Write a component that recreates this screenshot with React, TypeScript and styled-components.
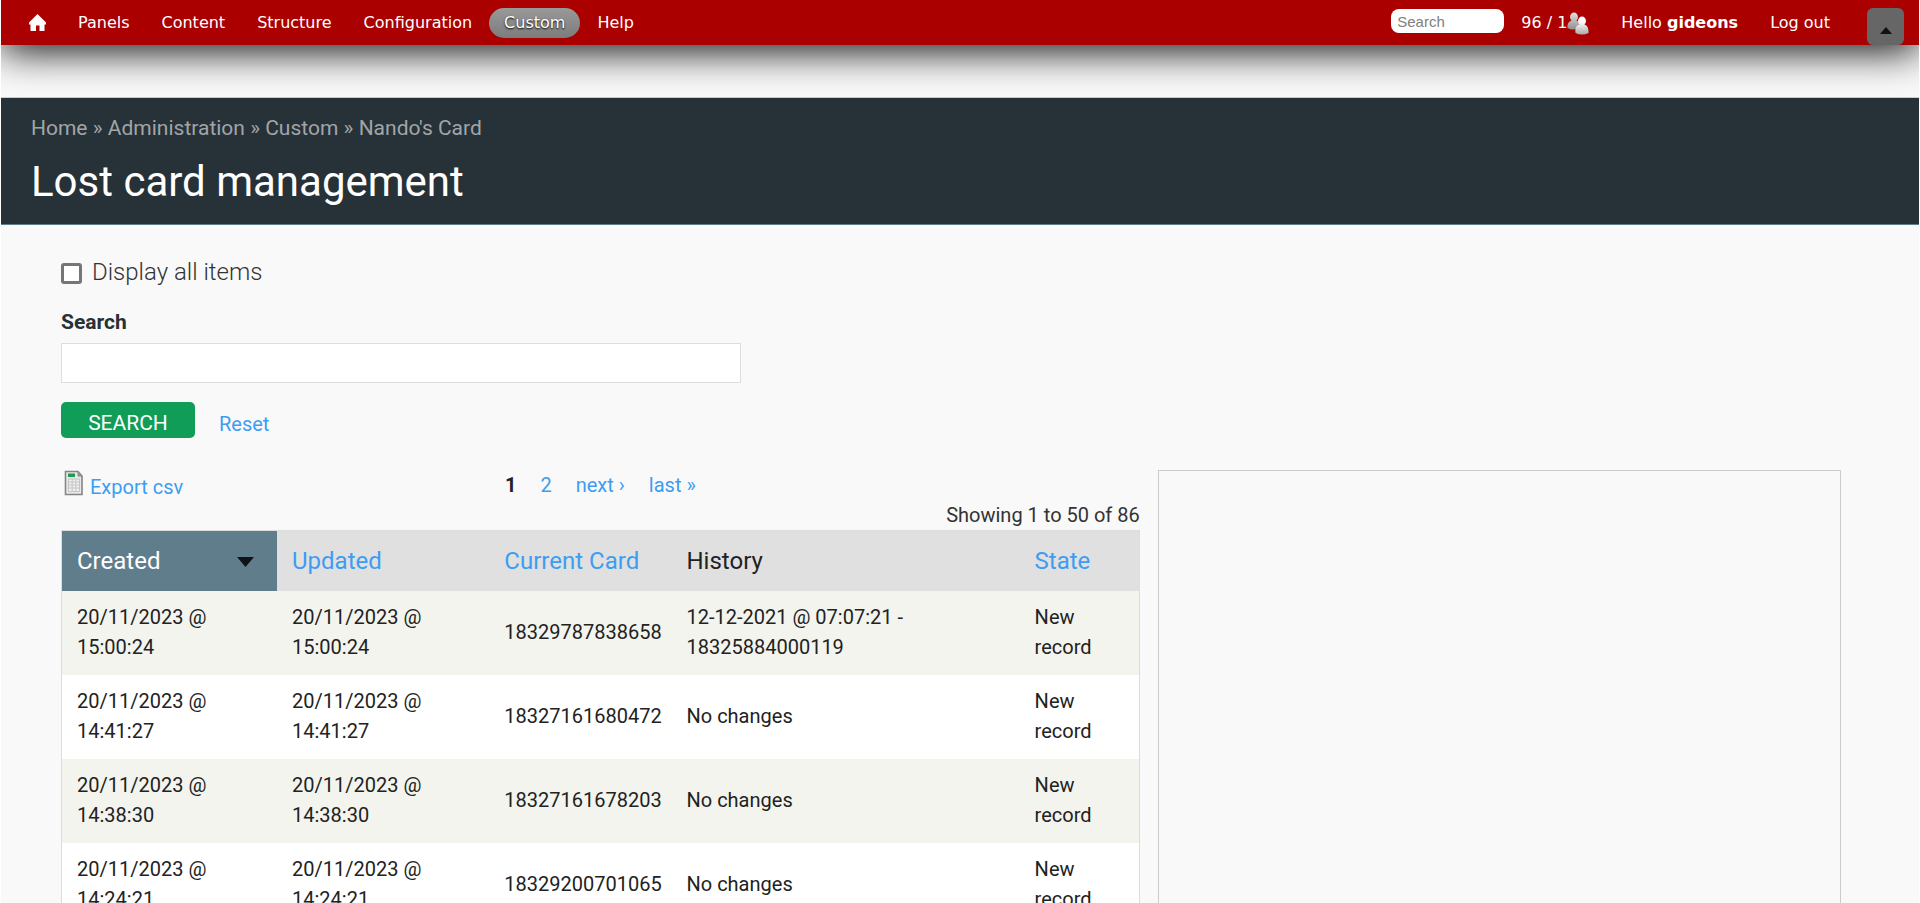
import React from 'react';
import styled, { createGlobalStyle } from 'styled-components';

const GlobalStyle = createGlobalStyle`
  *, *::before, *::after { box-sizing: border-box; }
  html { background: #fff; overflow: hidden; }
  body {
    margin: 0 1px;
    background: #f9f9f9;
    color: #222;
    font: 20px/30px Roboto, sans-serif;
  }
  a { color: #3c9df2; text-decoration: none; }
`;

const Toolbar = styled.nav`
  position: relative;
  display: flex;
  justify-content: space-between;
  padding: 8px 15px 0 13px;
  height: 45px;
  background: #a00;
  box-shadow: 0 5px 40px #000;
  font: 16px/30px "DejaVu Sans", sans-serif;
  color: #fff;
`;

const MenuList = styled.ul`
  display: flex;
  gap: 2px;
  margin: 0;
  padding: 0;
  list-style: none;
`;

const MenuLink = styled.a<{ $active?: boolean }>`
  display: flex;
  align-items: center;
  height: 30px;
  padding: 0 15px;
  border-radius: 15px;
  color: #fff;
  background: ${(p) => (p.$active ? 'linear-gradient(#999, #7c7c7c)' : 'none')};
  text-shadow: ${(p) => (p.$active ? '0 1px 2px #000' : 'none')};
`;

const Account = styled.div`
  display: flex;
  gap: 2px;
`;

const QuickSearch = styled.input`
  width: 113px;
  height: 24px;
  margin-top: 1px;
  padding: 0 6px;
  border: 0;
  border-radius: 8px;
  background: #fff;
  font: 15px "Liberation Sans", sans-serif;
  &::placeholder { color: #808080; opacity: 1; }
`;

const ToggleButton = styled.button`
  width: 37px;
  height: 37px;
  margin-left: 20px;
  padding: 6px 0 0;
  border: 0;
  border-radius: 6px;
  background: #666;
`;

const Header = styled.header`
  margin-top: 52px;
  padding: 15px 30px 17px;
  border-top: 1px solid #ccc;
  border-bottom: 1px solid #607d8b;
  background: #273238;
`;

const Breadcrumb = styled.nav`
  color: #a2a5a7;
  font-size: 21px;
  a { color: #a2a5a7; }
`;

const Title = styled.h1`
  margin: 14px 0 0;
  font-size: 42px;
  line-height: 50px;
  font-weight: 400;
  color: #fff;
`;

const Main = styled.main`
  padding: 32px 78px 0 60px;
`;

const CheckRow = styled.div`
  display: flex;
  align-items: center;
  gap: 10px;
  label { font-size: 24px; font-weight: 300; color: #333; }
`;

const CheckBox = styled.input`
  appearance: none;
  width: 21px;
  height: 21px;
  margin: 2px 0 0;
  border: 3px solid #767676;
  border-radius: 3px;
  background: #fff;
`;

const FieldLabel = styled.label`
  display: block;
  margin: 20px 0 6px;
  font-size: 21px;
  font-weight: 700;
  color: #273238;
`;

const TextField = styled.input`
  display: block;
  width: 100%;
  max-width: 680px;
  height: 40px;
  padding: 0 10px;
  border: 1px solid #ddd;
  background: #fff;
  font: inherit;
`;

const Actions = styled.div`
  display: flex;
  gap: 24px;
  margin-top: 19px;
  a { padding-top: 7px; }
`;

const SubmitButton = styled.button`
  width: 134px;
  height: 36px;
  padding: 6px 0 0;
  border: 0;
  border-radius: 5px;
  background: #0f9d58;
  color: #fff;
  font: 21px/30px Roboto, sans-serif;
`;

const Columns = styled.div`
  display: grid;
  grid-template-columns: 1080fr 684fr;
  gap: 18px;
  margin-top: 31px;
`;

const ListHead = styled.div`
  display: grid;
  grid-template-columns: 1fr auto 1fr;
`;

const ExportLink = styled.a`
  display: flex;
  gap: 6px;
  padding-left: 3px;
  span { padding-top: 2px; }
`;

const Pager = styled.ul`
  display: flex;
  gap: 24px;
  margin: 0;
  padding: 0;
  list-style: none;
`;

const Summary = styled.div`
  padding-bottom: 2px;
  text-align: right;
  line-height: 26px;
  color: #333;
`;

const Table = styled.table`
  width: 100%;
  table-layout: fixed;
  border-collapse: collapse;
  border: 1px solid #ddd;
`;

const HeadCell = styled.th<{ $sorted?: boolean; $share: number }>`
  width: ${(p) => p.$share}%;
  height: 60px;
  padding: 0 15px;
  text-align: left;
  font-size: 24px;
  font-weight: 400;
  background: ${(p) => (p.$sorted ? '#607d8b' : '#e0e0e0')};
  a { color: ${(p) => (p.$sorted ? '#fff' : '#3c9df2')}; }
`;

const SortLink = styled.a`
  display: flex;
  align-items: center;
  justify-content: space-between;
  padding-right: 8px;
  svg { margin-top: 3px; }
`;

const Row = styled.tr`
  background: #fff;
  &:nth-child(odd) { background: #f3f4ee; }
`;

const Cell = styled.td`
  height: 84px;
  padding: 11px 15px 13px;
`;

const DateText = styled.div`
  max-width: 160px;
`;

const Detail = styled.aside`
  border: 1px solid #ccc;
`;

const HomeIcon = () => (
  <svg width="17" height="18" viewBox="0 0 17 18" aria-label="Home">
    <path d="M8.5 0 L17 8.5 V10.500 H15.500 V17 H10.500 V11.500 H7 V17 H1.500 V10.500 H0 V8.5 Z" fill="#fff" />
  </svg>
);

const UsersIcon = () => (
  <svg width="22" height="24" viewBox="0 0 22 24" aria-hidden="true">
    <defs>
      <linearGradient id="personBack" x1="0" y1="0" x2="0" y2="1">
        <stop offset="0" stopColor="#e2e2e2" />
        <stop offset="1" stopColor="#8f8f8f" />
      </linearGradient>
      <linearGradient id="personFront" x1="0" y1="0" x2="0" y2="1">
        <stop offset="0.3" stopColor="#fff" />
        <stop offset="1" stopColor="#aaa" />
      </linearGradient>
    </defs>
    <path d="M0.500 17 Q0 11 4.500 9.500 A4 4.500 0 1 1 9.500 9.500 Q13 11 12.500 17 Q6 20 0.500 17 Z" fill="url(#personBack)" />
    <path d="M8.500 22 Q7.500 15 12.500 13.500 A4 4.500 0 1 1 17.500 13.500 Q22 15 21.500 22 Q15 25 8.500 22 Z" fill="url(#personFront)" />
  </svg>
);

const UpIcon = () => (
  <svg width="12" height="7" viewBox="0 0 12 7" aria-hidden="true">
    <path d="M6 0 L12 7 H0 Z" fill="#111" />
  </svg>
);

const DownIcon = () => (
  <svg width="17" height="10" viewBox="0 0 17 10" aria-hidden="true">
    <path d="M0 0 H17 L8.500 10 Z" fill="#111118" />
  </svg>
);

const SheetIcon = () => (
  <svg width="20" height="26" viewBox="0 0 20 26" aria-hidden="true">
    <path d="M1.500 1.500 H14 L18 6 V24.500 H1.500 Z" fill="#e8e8e8" stroke="#858585" strokeWidth="1.600" />
    <path d="M14 1.500 V6 H18" fill="#999" stroke="#888" />
    <path d="M4 3.500 H11 V7 H4 Z" fill="#22994e" />
    <path d="M4.500 9 H15.500 V21.500 H4.500 Z M8.200 9 V21.500 M11.800 9 V21.500 M4.500 12 H15.500 M4.500 15 H15.500 M4.500 18 H15.500" fill="#f0f0f0" stroke="#c4c4c4" />
  </svg>
);

const menu = ['Panels', 'Content', 'Structure', 'Configuration', 'Custom', 'Help'];

const records = [
  { time: '15:00:24', card: '18329787838658', history: ['12-12-2021 @ 07:07:21 -', '18325884000119'] },
  { time: '14:41:27', card: '18327161680472', history: ['No changes'] },
  { time: '14:38:30', card: '18327161678203', history: ['No changes'] },
  { time: '14:24:21', card: '18329200701065', history: ['No changes'] },
];

export default function App() {
  return (
    <>
      <GlobalStyle />
      <Toolbar>
        <MenuList>
          <li><MenuLink href="#home"><HomeIcon /></MenuLink></li>
          {menu.map((name) => (
            <li key={name}><MenuLink href={`#${name}`} $active={name === 'Custom'}>{name}</MenuLink></li>
          ))}
        </MenuList>
        <Account>
          <QuickSearch type="search" placeholder="Search" aria-label="Quick search" />
          <MenuLink href="#users">96 / 1<UsersIcon /></MenuLink>
          <MenuLink href="#account"><span>Hello <strong>gideons</strong></span></MenuLink>
          <MenuLink href="#logout">Log out</MenuLink>
          <ToggleButton type="button" aria-label="Collapse toolbar"><UpIcon /></ToggleButton>
        </Account>
      </Toolbar>
      <Header>
        <Breadcrumb aria-label="Breadcrumb">
          <a href="#home">Home</a> » <a href="#admin">Administration</a> » <a href="#custom">Custom</a> » <a href="#card">Nando's Card</a>
        </Breadcrumb>
        <Title>Lost card management</Title>
      </Header>
      <Main>
        <form onSubmit={(e) => e.preventDefault()}>
          <CheckRow>
            <CheckBox type="checkbox" id="all" />
            <label htmlFor="all">Display all items</label>
          </CheckRow>
          <FieldLabel htmlFor="search">Search</FieldLabel>
          <TextField id="search" type="text" />
          <Actions>
            <SubmitButton type="submit">SEARCH</SubmitButton>
            <a href="#reset">Reset</a>
          </Actions>
        </form>
        <Columns>
          <section>
            <ListHead>
              <ExportLink href="#export"><SheetIcon /><span>Export csv</span></ExportLink>
              <Pager>
                <li><strong>1</strong></li>
                <li><a href="#2">2</a></li>
                <li><a href="#next">next ›</a></li>
                <li><a href="#last">last »</a></li>
              </Pager>
            </ListHead>
            <Summary>Showing 1 to 50 of 86</Summary>
            <Table>
              <thead>
                <tr>
                  <HeadCell $share={20} $sorted><SortLink href="#created">Created<DownIcon /></SortLink></HeadCell>
                  <HeadCell $share={19.7}><a href="#updated">Updated</a></HeadCell>
                  <HeadCell $share={16.9}><a href="#current">Current Card</a></HeadCell>
                  <HeadCell $share={32.3}>History</HeadCell>
                  <HeadCell $share={11.1}><a href="#state">State</a></HeadCell>
                </tr>
              </thead>
              <tbody>
                {records.map((r) => (
                  <Row key={r.time}>
                    <Cell><DateText>20/11/2023 @ {r.time}</DateText></Cell>
                    <Cell><DateText>20/11/2023 @ {r.time}</DateText></Cell>
                    <Cell>{r.card}</Cell>
                    <Cell>{r.history.map((line) => <div key={line}>{line}</div>)}</Cell>
                    <Cell>New record</Cell>
                  </Row>
                ))}
              </tbody>
            </Table>
          </section>
          <Detail />
        </Columns>
      </Main>
    </>
  );
}
